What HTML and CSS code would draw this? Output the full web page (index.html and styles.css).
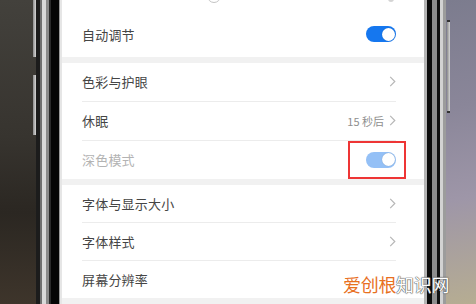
FILE: index.html
```html
<!DOCTYPE html>
<html lang="zh-CN">

<head>
    <meta charset="UTF-8">
    <meta name="viewport" content="width=device-width, initial-scale=1.0">
    <title>显示与亮度</title>
    <link rel="stylesheet" href="styles.css">
</head>

<body>
    <div class="scene">
        <div class="edge-left">
            <span class="side-button btn-upper"></span>
            <span class="side-button btn-lower"></span>
        </div>
        <div class="bezel-left"></div>

        <main class="screen">
            <section class="card card-top">
                <div class="slider">
                    <span class="slider-thumb"></span>
                    <span class="slider-end"></span>
                </div>
                <div class="row row-tall">
                    <span class="label">自动调节</span>
                    <span class="switch"><span class="knob"></span></span>
                </div>
            </section>

            <div class="band"></div>

            <section class="card">
                <div class="row">
                    <span class="label">色彩与护眼</span>
                    <svg class="chevron" viewBox="0 0 7 12"><polyline points="1,1 6,6 1,11" /></svg>
                </div>
                <div class="row">
                    <span class="label">休眠</span>
                    <span class="value">15 秒后</span>
                    <svg class="chevron" viewBox="0 0 7 12"><polyline points="1,1 6,6 1,11" /></svg>
                </div>
                <div class="row row-last">
                    <span class="label label-disabled">深色模式</span>
                    <span class="switch switch-disabled"><span class="knob"></span></span>
                    <span class="highlight"></span>
                </div>
            </section>

            <div class="band band-wide"></div>

            <section class="card card-bottom">
                <div class="row">
                    <span class="label">字体与显示大小</span>
                    <svg class="chevron" viewBox="0 0 7 12"><polyline points="1,1 6,6 1,11" /></svg>
                </div>
                <div class="row">
                    <span class="label">字体样式</span>
                    <svg class="chevron" viewBox="0 0 7 12"><polyline points="1,1 6,6 1,11" /></svg>
                </div>
                <div class="row row-last">
                    <span class="label">屏幕分辨率</span>
                </div>
            </section>

            <div class="band"></div>
        </main>

        <div class="bezel-right"></div>
        <div class="edge-right">
            <span class="side-button btn-right"></span>
        </div>
    </div>

    <div class="watermark"><span class="wm-orange">爱创根</span>知识网</div>
</body>

</html>
```

FILE: styles.css
```css
:root {
    --text-color: #454545;
    --muted-color: #8e8e8e;
    --disabled-color: #b3b3b3;
    --divider-color: #ececec;
    --band-color: #f1f1f1;
    --switch-on: #1577ef;
    --switch-off: #94c0f6;
    --highlight: #ee3535;
}

* {
    box-sizing: border-box;
}

body {
    margin: 0;
    width: 476px;
    height: 304px;
    overflow: hidden;
    font-family: "Noto Sans CJK SC", "Noto Sans", sans-serif;
    position: relative;
}

.scene {
    display: flex;
    height: 304px;
}

/* surroundings of the phone */
.edge-left {
    width: 36px;
    display: flex;
    flex-direction: column;
    align-items: flex-end;
    background: linear-gradient(180deg, #43413c 0%, #37342f 45%, #2b2722 70%, #3e352b 100%);
}

.side-button {
    display: block;
    width: 3px;
    background: linear-gradient(90deg, #8c8c8c, #d6d6d6);
}

.btn-upper {
    height: 57px;
}

.btn-lower {
    height: 60px;
    margin-top: 18px;
}

.bezel-left {
    width: 24px;
    background: linear-gradient(90deg,
        #1c1c1c 0, #1c1c1c 4px,
        #6f6f6f 4px, #6f6f6f 6px,
        #d9d9d9 6px, #d9d9d9 10px,
        #8a8a8a 10px, #8a8a8a 13px,
        #2a2a2a 13px, #2a2a2a 15px,
        #050505 15px, #050505 23px,
        #9a9a9a 23px);
}

.bezel-right {
    width: 22px;
    background: linear-gradient(90deg,
        #b4b4b4 0, #b4b4b4 3px,
        #0c0c0c 3px, #0c0c0c 8px,
        #8e8e8e 8px, #8e8e8e 13px,
        #111 13px, #111 16px,
        #d2d2d2 16px, #d2d2d2 19px,
        #9c9c9c 19px);
}

.edge-right {
    flex: 1;
    padding: 20px 0 0 1px;
    background: linear-gradient(170deg, #7c7c8e 0%, #8a8699 35%, #9e96a8 65%, #b6ad92 100%);
}

.btn-right {
    height: 93px;
    border-top: 2px solid #333;
    border-bottom: 2px solid #333;
}

/* screen */
.screen {
    width: 364px;
    background: #fff;
    display: flex;
    flex-direction: column;
    border-left: 2px solid #e6e6e6;
}

.card {
    background: #fff;
}

.slider {
    height: 12px;
    display: flex;
    justify-content: space-between;
    padding: 0 30px 0 145px;
}

.slider-thumb {
    width: 14px;
    height: 14px;
    margin-top: -11px;
    border-radius: 50%;
    background: #fff;
    border: 1px solid #c4c4c4;
}

.slider-end {
    width: 6px;
    height: 3px;
    margin-top: -1px;
    background: #d4d4d4;
    border-radius: 0 0 3px 3px;
}

.row {
    height: 39px;
    margin: 0 28px 0 20px;
    display: flex;
    align-items: center;
    gap: 5px;
    border-bottom: 1px solid var(--divider-color);
    position: relative;
}

.row-tall {
    height: 45px;
    border-bottom: none;
    padding-bottom: 1px;
}

.card-bottom .row {
    height: 38px;
}

.row-last {
    height: 38px;
    border-bottom: none;
}

.card-bottom .row-last {
    height: 37px;
    border-bottom: none;
}

.label {
    flex: 1;
    font-size: 13px;
    color: var(--text-color);
    letter-spacing: 0.2px;
}

.label-disabled {
    color: var(--disabled-color);
}

.value {
    font-size: 11px;
    color: var(--muted-color);
}

.chevron {
    width: 7px;
    height: 11px;
    fill: none;
    stroke: #b7b7b7;
    stroke-width: 1.3;
}

.switch {
    width: 30px;
    height: 16px;
    border-radius: 8px;
    background: var(--switch-on);
    display: flex;
    justify-content: flex-end;
    align-items: center;
    padding: 0 1.5px;
}

.switch-disabled {
    background: var(--switch-off);
}

.knob {
    width: 13px;
    height: 13px;
    border-radius: 50%;
    background: #fff;
    box-shadow: 0 0 1px rgb(0 0 0 / 0.25);
}

.highlight {
    position: absolute;
    right: -10px;
    top: 0;
    width: 58px;
    height: 38px;
    border: 2.5px solid var(--highlight);
}

.band {
    height: 6px;
    background: var(--band-color);
}

.band-wide {
    height: 7px;
}

/* watermark overlay */
.watermark {
    position: absolute;
    left: 343px;
    top: 273px;
    font-size: 18px;
    line-height: 22px;
    letter-spacing: -0.3px;
    color: #fff;
    text-shadow: 0 0 1px #555, 0 0 1px #555, 0 0 1px #555;
}

.wm-orange {
    color: #e8701f;
    text-shadow: 0 0 1px #fff;
}
```
